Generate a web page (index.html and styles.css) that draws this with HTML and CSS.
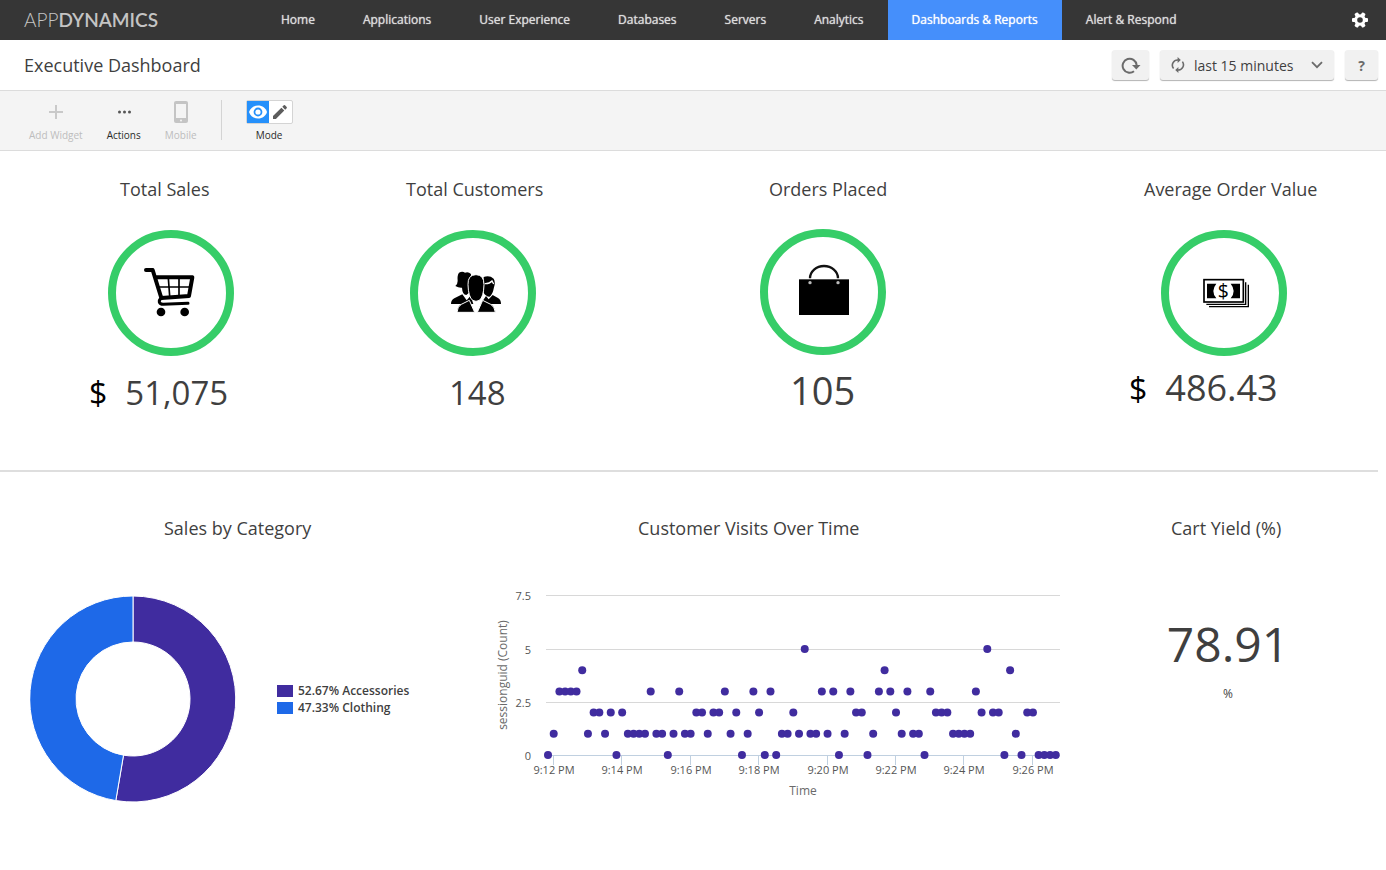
FILE: index.html
```html
<!DOCTYPE html>
<html lang="en">
<head>
    <meta charset="UTF-8">
    <meta name="viewport" content="width=device-width, initial-scale=1.0">
    <title>Executive Dashboard</title>
    <link rel="stylesheet" href="styles.css">
</head>
<body>
    <header class="topbar">
        <a class="logo" href="#"><span class="logo-light">APP</span><span class="logo-bold">DYNAMICS</span></a>
        <nav class="nav">
            <a href="#">Home</a>
            <a href="#">Applications</a>
            <a href="#">User Experience</a>
            <a href="#">Databases</a>
            <a href="#">Servers</a>
            <a href="#">Analytics</a>
            <a href="#" class="active">Dashboards &amp; Reports</a>
            <a href="#">Alert &amp; Respond</a>
        </nav>
        <button class="settings" type="button" aria-label="Settings">
            <svg width="16" height="16" viewBox="-8 -8 16 16">
                <g fill="#fff">
                    <rect x="-8" y="-2" width="16" height="4" rx="1"/>
                    <rect x="-8" y="-2" width="16" height="4" rx="1" transform="rotate(60)"/>
                    <rect x="-8" y="-2" width="16" height="4" rx="1" transform="rotate(120)"/>
                </g>
                <circle r="4.3" fill="#363636" stroke="#fff" stroke-width="3"/>
            </svg>
        </button>
    </header>

    <div class="titlebar">
        <h1>Executive Dashboard</h1>
        <div class="controls">
            <button class="btn btn-refresh" type="button" aria-label="Refresh">
                <svg width="20" height="18" viewBox="0 0 20 18">
                  <path d="M13 15.200 A7 7 0 1 1 15.600 9" fill="none" stroke="#6b6b6b" stroke-width="2"/>
                  <path d="M11 9h8.500l-4.200 4.500z" fill="#6b6b6b"/>
                </svg>
            </button>
            <div class="btn time-range">
                <svg width="14" height="16" viewBox="0 0 14 16">
                    <g fill="none" stroke="#6b6b6b" stroke-width="1.6">
                        <path d="M2.6 11.6A5.3 5.3 0 0 1 7.4 3"/>
                        <path d="M11.4 4.6A5.3 5.3 0 0 1 6.6 13"/>
                    </g>
                    <path d="M6.6 0v6l3.2-3zM7.4 16v-6l-3.2 3z" fill="#6b6b6b"/>
                </svg>
                <select aria-label="Time range">
                    <option>last 15 minutes</option>
                </select>
                <svg width="12" height="8" viewBox="0 0 12 8">
                    <path d="M1 1.2l5 5 5-5" fill="none" stroke="#6b6b6b" stroke-width="1.8"/>
                </svg>
            </div>
            <button class="btn btn-help" type="button" aria-label="Help">?</button>
        </div>
    </div>

    <div class="toolbar">
        <button class="tool" type="button" disabled>
            <svg width="24" height="24" viewBox="0 0 24 24"><path d="M12 5v14M5 12h14" stroke="#c9c9c9" stroke-width="2"/></svg>
            Add Widget
        </button>
        <button class="tool" type="button">
            <svg width="24" height="24" viewBox="0 0 24 24" fill="#555"><circle cx="7.5" cy="12" r="1.5"/><circle cx="12.5" cy="12" r="1.5"/><circle cx="17.5" cy="12" r="1.5"/></svg>
            Actions
        </button>
        <button class="tool" type="button" disabled>
            <svg width="24" height="24" viewBox="0 0 24 24">
                <path fill="#c4c4c4" fill-rule="evenodd" d="M7 1h10a2 2 0 0 1 2 2v18a2 2 0 0 1-2 2H7a2 2 0 0 1-2-2V3a2 2 0 0 1 2-2zM7 4v14h10V4z"/>
                <circle cx="12" cy="20.5" r="1" fill="#f4f4f4"/>
            </svg>
            Mobile
        </button>
        <div class="separator"></div>
        <div class="tool mode" role="radiogroup" aria-labelledby="mode-label">
            <div class="mode-switch">
                <input type="radio" name="mode" id="mode-view" checked>
                <label for="mode-view" aria-label="View">
                    <svg width="20" height="14" viewBox="0 0 20 14">
                        <path fill="currentColor" d="M10 .5C5.500.500 2.300 3 1 7c1.300 4 4.500 6.500 9 6.500s7.700-2.500 9-6.500C17.700 3 14.500.500 10 .500z"/>
                        <circle class="eye-white" cx="10" cy="7" r="4.400"/>
                        <circle cx="10" cy="7" r="2.600" fill="currentColor"/>
                    </svg>
                </label>
                <input type="radio" name="mode" id="mode-edit">
                <label for="mode-edit" aria-label="Edit">
                    <svg width="16" height="16" viewBox="0 0 16 16" fill="currentColor">
                        <path d="M1 12.100V15h2.900l8.400-8.400-2.900-2.900zM14.700 4.200a1 1 0 0 0 0-1.200L13 1.300a1 1 0 0 0-1.200 0L10.300 2.800l2.900 2.900z"/>
                    </svg>
                </label>
            </div>
            <span id="mode-label">Mode</span>
        </div>
    </div>

    <main>
        <section class="kpis">
            <div class="kpi-titles">
                <h2>Total Sales</h2>
                <h2>Total Customers</h2>
                <h2>Orders Placed</h2>
                <h2>Average Order Value</h2>
            </div>
            <div class="kpi-rings">
                <!-- cart -->
                <svg class="ring" viewBox="84 180 378 378">
                    <circle class="ring-line" cx="273" cy="369" r="177"/>
                    <g fill="none" stroke="#000" stroke-linecap="round" stroke-linejoin="round">
                        <path stroke-width="12" d="M198 300h20l26 84 83-6 10-56H228"/>
                        <path stroke-width="5" d="M265 324l4 54M297 324v52M236 351h94"/>
                        <path stroke-width="9" d="M243 386q-6 3-5 10 2 7 12 7l74-3"/>
                    </g>
                    <circle cx="243" cy="426" r="13"/>
                    <circle cx="314" cy="426" r="13"/>
                </svg>
                <!-- people -->
                <svg class="ring" viewBox="60 180 378 378">
                    <circle class="ring-line" cx="249" cy="369" r="177"/>
                    <path d="M207 308q10-5 18 0 10-4 18 4l-4 55-10 8q-12-1-13-22-10 1-20-5 7-5 7-15-2-17 4-25z"/>
                    <path d="M183 402q0-12 10-17l24-12 13 18 12-14 8 25z"/>
                    <path d="M281 321q18-6 30 5 6 10 1 26-4 22-13 28-12-1-18-12z"/>
                    <path d="M272 402l16-24 8 10 12-13 16 9q9 5 9 18z"/>
                    <path d="M284 341q14 1 22-8l5 9" fill="none" stroke="#fff" stroke-width="4"/>
                    <g stroke="#fff" stroke-width="3">
                        <path d="M201 427q1-18 13-24l24-12 16 36zM262 427l16-36 24 12q12 6 14 24z"/>
                        <path d="M258 314q24 0 24 30-1 37-14 47-10 6-20 0-13-10-14-47-1-30 24-30z"/>
                    </g>
                </svg>
                <!-- bag -->
                <svg class="ring" viewBox="60 180 378 378">
                    <circle class="ring-line" cx="249" cy="366" r="177"/>
                    <path d="M210 325a42 37 0 0 1 84 0" fill="none" stroke="#111" stroke-width="7"/>
                    <rect x="177" y="328" width="150" height="107"/>
                    <circle cx="210" cy="338" r="5" fill="#bbb"/>
                    <circle cx="294" cy="338" r="5" fill="#bbb"/>
                </svg>
                <!-- bank notes -->
                <svg class="ring" viewBox="153 180 378 378">
                    <circle class="ring-line" cx="342" cy="369" r="177"/>
                    <path d="M297 410h118v-66M289 403h118v-66" fill="none" stroke="#000" stroke-width="4"/>
                    <rect x="282" y="329" width="118" height="67" fill="#fff" stroke="#000" stroke-width="5"/>
                    <path d="M291 341h28q-18 22 0 44h-28zM390 341h-28q18 22 0 44h28z"/>
                    <text x="340" y="383" text-anchor="middle" font-size="58">$</text>
                </svg>
            </div>
            <div class="kpi-values">
                <p class="value"><span class="currency">$</span>51,075</p>
                <p class="value">148</p>
                <p class="value value-orders">105</p>
                <p class="value value-average"><span class="currency">$</span>486.43</p>
            </div>
        </section>

        <section class="details">
            <div class="detail-titles">
                <h2>Sales by Category</h2>
                <h2>Customer Visits Over Time</h2>
                <h2>Cart Yield (%)</h2>
            </div>
            <div class="panels">
                <div class="category">
                    <svg class="donut" viewBox="0 0 206 206" stroke="#fff" stroke-width="1">
                        <path fill="#402c9f" d="M103 0A103 103 0 1 1 85.800 204.600L93.500 159.200A57 57 0 1 0 103 46z"/>
                        <path fill="#1e69e8" d="M85.800 204.600A103 103 0 0 1 103 0V46A57 57 0 0 0 93.500 159.200z"/>
                    </svg>
                    <ul class="legend">
                        <li><span class="swatch accessories"></span>52.67% Accessories</li>
                        <li><span class="swatch clothing"></span>47.33% Clothing</li>
                    </ul>
                </div>
                <svg class="visits" id="visits" viewBox="0 0 574 230">
                    <text class="axis-title" transform="rotate(-90)" x="-95" y="11" text-anchor="middle">sessionguid (Count)</text>
                    <text class="axis-title" x="307" y="215" text-anchor="middle">Time</text>
                </svg>
                <div class="yield">
                    <p class="yield-value">78.91</p>
                    <p class="yield-unit">%</p>
                </div>
            </div>
        </section>
    </main>

    <script>
        // visits per 10 seconds, starting just before 9:12 PM
        const visits = [
            0, 1, 3, 3, 3, 3, 4, 1, 2, 2, 1, 2, 0, 2, 1, 1, 1, 1, 3, 1,
            1, 0, 1, 3, 1, 1, 2, 2, 1, 2, 2, 3, 1, 2, 0, 1, 3, 2, 0, 3,
            0, 1, 1, 2, 1, 5, 1, 1, 3, 1, 3, 0, 1, 3, 2, 2, 0, 1, 3, 4,
            3, 2, 1, 3, 1, 1, 0, 3, 2, 2, 2, 1, 1, 1, 1, 3, 2, 5, 2, 2,
            0, 4, 1, 0, 2, 2, 0, 0, 0, 0
        ];
        const chart = document.getElementById('visits');

        function add(tag, attrs, text) {
            const el = document.createElementNS('http://www.w3.org/2000/svg', tag);
            for (const key in attrs) {
                el.setAttribute(key, attrs[key]);
            }
            if (text) el.textContent = text;
            chart.appendChild(el);
        }

        // horizontal grid and y labels
        [7.5, 5, 2.5, 0].forEach((value, i) => {
            const y = [15.5, 69.5, 122.5, 175.5][i];
            add('line', { x1: 50, x2: 564, y1: y, y2: y, class: value ? 'grid' : 'axis' });
            add('text', { x: 35, y: y + 4, 'text-anchor': 'end' }, String(value));
        });

        // a tick every two minutes
        for (let i = 0; i < 8; i++) {
            const x = Math.floor(57.5 + i * 68.4);
            add('line', { x1: x + 0.5, x2: x + 0.5, y1: 175, y2: 185, class: 'axis' });
            add('text', { x: x + 1, y: 194, 'text-anchor': 'middle' }, `9:${12 + i * 2} PM`);
        }

        visits.forEach((count, i) => {
            add('circle', { cx: 52 + i * 5.705, cy: 175 - count * 21.2, r: 4, class: 'point' });
        });
    </script>
</body>
</html>
```
FILE: styles.css
```css
* {
    box-sizing: border-box;
}
body {
    margin: 0;
    font-family: "Open Sans", "Liberation Sans", sans-serif;
    font-size: 12px;
    color: #3f3f3f;
    background-color: #fff;
}
h1, h2, p, ul {
    margin: 0;
    padding: 0;
    font-weight: 400;
}
h1, h2 {
    font-size: 18px;
    line-height: 24px;
}
svg {
    display: block;
}
button {
    font-family: inherit;
    border: 0;
    padding: 0;
    background: none;
}

/* top navigation */
.topbar {
    display: flex;
    align-items: center;
    height: 40px;
    padding-right: 18px;
    background-color: #363636;
}
.logo {
    flex: 0 0 257px;
    padding-left: 24px;
    font-family: Lato, sans-serif;
    font-size: 19px;
    line-height: 40px;
    color: #c4c4c4;
    text-decoration: none;
}
.logo-light {
    font-weight: 300;
}
.logo-bold {
    font-weight: 600;
}
.nav {
    display: flex;
    flex: 1;
}
.nav a {
    padding: 0 24px;
    line-height: 40px;
    color: #dcdcdc;
    text-decoration: none;
    text-shadow: 0 0 1px currentColor;
    white-space: nowrap;
}
.nav a.active {
    color: #fff;
    background-color: #458ffb;
}

/* page title and time range */
.titlebar {
    display: flex;
    align-items: center;
    justify-content: space-between;
    height: 51px;
    padding: 0 8px 0 24px;
    border-bottom: 1px solid #dcdcdc;
}
.controls {
    display: flex;
    gap: 11px;
}
.btn {
    display: flex;
    align-items: center;
    justify-content: center;
    height: 30px;
    border-radius: 3px;
    background-color: #f1f1f1;
    box-shadow: 0 1px 1px rgba(0, 0, 0, 0.3);
}
.btn-refresh {
    width: 37px;
}
.btn-help {
    width: 33px;
    font-size: 14px;
    font-weight: 700;
    color: #6b6b6b;
}
.time-range {
    gap: 9px;
    padding: 0 11px;
}
.time-range select {
    appearance: none;
    width: 108px;
    padding: 0;
    border: 0;
    background: none;
    font-family: inherit;
    font-size: 14px;
    color: #3f3f3f;
}

/* toolbar */
.toolbar {
    display: flex;
    gap: 24px;
    height: 60px;
    padding: 9px 29px 8px;
    background-color: #f4f4f4;
    border-bottom: 1px solid #dcdcdc;
}
.tool {
    display: flex;
    flex-direction: column;
    align-items: center;
    gap: 4px;
    font-size: 10px;
    line-height: 14px;
    color: #2b2b2b;
}
.tool:disabled {
    color: #bdbdbd;
}
.separator {
    width: 1px;
    height: 40px;
    background-color: #d4d4d4;
}
.mode-switch {
    display: flex;
    border: 1px solid #d4d4d4;
    border-radius: 2px;
    background-color: #fff;
}
.mode-switch input {
    position: absolute;
    opacity: 0;
    pointer-events: none;
}
.mode-switch label {
    display: flex;
    align-items: center;
    justify-content: center;
    width: 22px;
    height: 22px;
    color: #5c5c5c;
}
.mode-switch label + input + label {
    width: 23px;
}
.mode-switch input:checked + label {
    color: #fff;
    background-color: #2590fb;
}
.eye-white {
    fill: #2590fb;
}

/* key figures */
.kpis {
    margin-right: 8px;
    padding: 26px 0 56px;
    border-bottom: 2px solid #dedede;
}
.kpi-titles, .kpi-rings, .kpi-values, .detail-titles {
    display: grid;
    margin-right: -8px;
}
.kpi-titles {
    grid-template-columns: 286fr 363fr 375fr 242fr;
    padding-left: 120px;
}
.kpi-rings {
    grid-template-columns: 302fr 350fr 401fr 225fr;
    padding: 29px 0 13px 108px;
}
.kpi-values {
    grid-template-columns: 360fr 341fr 339fr 257fr;
    align-items: baseline;
    padding-left: 89px;
}
.ring {
    width: 126px;
    height: 126px;
    overflow: visible;
}
.ring-line {
    fill: none;
    stroke: #36cd68;
    stroke-width: 24;
}
.value {
    font-size: 33px;
    line-height: 42px;
}
.value-orders {
    font-size: 38px;
}
.value-average {
    align-self: start;
    font-size: 36px;
    line-height: 38px;
}
.currency {
    margin-right: 18px;
    font-size: 32px;
    color: #000;
}

/* charts */
.detail-titles {
    grid-template-columns: 474fr 533fr 215fr;
    margin-right: 0;
    padding: 44px 0 40px 164px;
}
.panels {
    display: grid;
    grid-template-columns: 466fr 574fr 316fr;
    align-items: start;
    padding-left: 30px;
}
.category {
    display: flex;
    align-items: center;
    gap: 41px;
    padding-top: 16px;
}
.donut {
    width: 206px;
    height: 206px;
}
.legend {
    list-style: none;
    font-weight: 600;
    line-height: 17px;
}
.legend li {
    display: flex;
    align-items: center;
    gap: 5px;
}
.swatch {
    width: 16px;
    height: 12px;
}
.accessories {
    background-color: #402c9f;
}
.clothing {
    background-color: #1e69e8;
}
.visits {
    width: 100%;
    overflow: visible;
    font-size: 11px;
    fill: #555;
}
.visits .axis-title {
    font-size: 12px;
    fill: #6a6a6a;
}
.grid {
    stroke: #d8d8d8;
}
.axis {
    stroke: #c0d0e0;
}
.point {
    fill: #402c9f;
}
.yield {
    padding-top: 40px;
    text-align: center;
}
.yield-value {
    font-size: 48px;
    line-height: 48px;
}
.yield-unit {
    padding-top: 16px;
    line-height: 20px;
}
```
